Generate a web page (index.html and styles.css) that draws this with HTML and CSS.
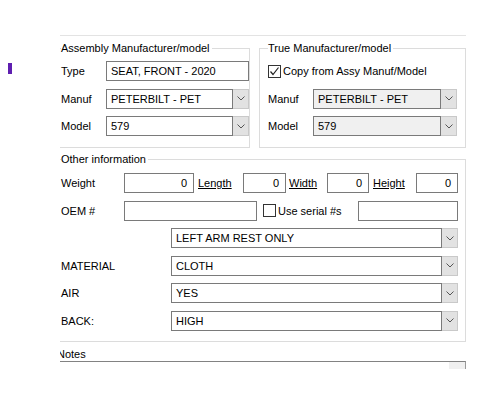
FILE: index.html
```html
<!DOCTYPE html>
<html>
<head>
<meta charset="utf-8">
<link rel="stylesheet" href="styles.css">
</head>
<body>
<div class="page">
  <div class="gutter"><div class="marker"></div></div>
  <div class="content">
    <div class="splitter-tick"></div>
    <div class="top-row">
      <fieldset class="group group-assy">
        <legend>Assembly Manufacturer/model</legend>
        <div class="row">
          <span class="lbl lbl-top">Type</span>
          <div class="field field-type">SEAT, FRONT - 2020</div>
        </div>
        <div class="row">
          <span class="lbl lbl-top">Manuf</span>
          <div class="combo combo-assy"><div class="combo-text">PETERBILT - PET</div><div class="combo-btn"><svg width="8" height="5" viewBox="0 0 8 5"><polyline points="0.5,0.5 4,4 7.5,0.5" fill="none" stroke="#555" stroke-width="1"/></svg></div></div>
        </div>
        <div class="row">
          <span class="lbl lbl-top">Model</span>
          <div class="combo combo-assy"><div class="combo-text">579</div><div class="combo-btn"><svg width="8" height="5" viewBox="0 0 8 5"><polyline points="0.5,0.5 4,4 7.5,0.5" fill="none" stroke="#555" stroke-width="1"/></svg></div></div>
        </div>
      </fieldset>
      <fieldset class="group group-true">
        <legend>True Manufacturer/model</legend>
        <div class="row">
          <span class="check checked"><svg width="11" height="11" viewBox="0 0 11 11"><polyline points="1.5,5.5 4,8.5 9.5,1.5" fill="none" stroke="#222" stroke-width="1.2"/></svg></span>
          <span class="check-text">Copy from Assy Manuf/Model</span>
        </div>
        <div class="row">
          <span class="lbl lbl-true">Manuf</span>
          <div class="combo combo-true disabled"><div class="combo-text">PETERBILT - PET</div><div class="combo-btn"><svg width="8" height="5" viewBox="0 0 8 5"><polyline points="0.5,0.5 4,4 7.5,0.5" fill="none" stroke="#555" stroke-width="1"/></svg></div></div>
        </div>
        <div class="row">
          <span class="lbl lbl-true">Model</span>
          <div class="combo combo-true disabled"><div class="combo-text">579</div><div class="combo-btn"><svg width="8" height="5" viewBox="0 0 8 5"><polyline points="0.5,0.5 4,4 7.5,0.5" fill="none" stroke="#555" stroke-width="1"/></svg></div></div>
        </div>
      </fieldset>
    </div>

    <fieldset class="group group-other">
      <legend>Other information</legend>
      <div class="rows">
        <div class="row">
          <span class="lbl lbl-other">Weight</span>
          <div class="field num w70">0</div>
          <span class="ulbl ul-len">Length</span>
          <div class="field num w43">0</div>
          <span class="ulbl ul-wid">Width</span>
          <div class="field num w42">0</div>
          <span class="ulbl ul-hei">Height</span>
          <div class="field num w42">0</div>
        </div>
        <div class="row">
          <span class="lbl lbl-other">OEM #</span>
          <div class="field w133"></div>
          <span class="check serial-check"></span>
          <span class="check-text">Use serial #s</span>
          <div class="field w100 push-right"></div>
        </div>
        <div class="row">
          <span class="lbl lbl-attr"></span>
          <div class="combo combo-wide"><div class="combo-text">LEFT ARM REST ONLY</div><div class="combo-btn"><svg width="8" height="5" viewBox="0 0 8 5"><polyline points="0.5,0.5 4,4 7.5,0.5" fill="none" stroke="#555" stroke-width="1"/></svg></div></div>
        </div>
        <div class="row">
          <span class="lbl lbl-attr">MATERIAL</span>
          <div class="combo combo-wide"><div class="combo-text">CLOTH</div><div class="combo-btn"><svg width="8" height="5" viewBox="0 0 8 5"><polyline points="0.5,0.5 4,4 7.5,0.5" fill="none" stroke="#555" stroke-width="1"/></svg></div></div>
        </div>
        <div class="row">
          <span class="lbl lbl-attr">AIR</span>
          <div class="combo combo-wide"><div class="combo-text">YES</div><div class="combo-btn"><svg width="8" height="5" viewBox="0 0 8 5"><polyline points="0.5,0.5 4,4 7.5,0.5" fill="none" stroke="#555" stroke-width="1"/></svg></div></div>
        </div>
        <div class="row">
          <span class="lbl lbl-attr">BACK:</span>
          <div class="combo combo-wide"><div class="combo-text">HIGH</div><div class="combo-btn"><svg width="8" height="5" viewBox="0 0 8 5"><polyline points="0.5,0.5 4,4 7.5,0.5" fill="none" stroke="#555" stroke-width="1"/></svg></div></div>
        </div>
      </div>
    </fieldset>

    <div class="notes-label">Notes</div>
    <div class="notes-box"><div class="notes-scroll"></div></div>
  </div>
</div>
</body>
</html>
```

FILE: styles.css
```css
html, body {
  margin: 0;
  padding: 0;
  background: #ffffff;
}
body {
  font-family: "Liberation Sans", Arial, sans-serif;
  font-size: 11px;
  color: #000;
  width: 500px;
  height: 400px;
  overflow: hidden;
}
.page {
  display: flex;
  padding-top: 35px;
}
.gutter {
  width: 60px;
  flex: none;
}
.marker {
  width: 4px;
  height: 11px;
  margin: 28px 0 0 8px;
  background: #5e1fb0;
}
.content {
  width: 406px;
  border-top: 1px solid #e3e3e3;
  overflow: hidden;
  position: relative;
}
.splitter-tick {
  position: absolute;
  left: 105px;
  top: -4px;
  width: 1px;
  height: 4px;
  background: #d0d0d0;
}
.top-row {
  display: flex;
  gap: 9px;
  margin-top: 5px;
}
.group {
  margin: 0;
  padding: 0;
  border: 1px solid #dcdcdc;
  min-width: 0;
}
.group legend {
  padding: 0 2px 0 0;
  margin-left: 0;
  line-height: 14px;
  height: 14px;
}
.group-assy {
  width: 190px;
  box-sizing: border-box;
  border-left: none;
  padding: 6px 0 11px 1px;
}
.group-true {
  width: 207px;
  box-sizing: border-box;
  padding: 6px 8px 11px 8px;
}
.row {
  display: flex;
  align-items: center;
  height: 20px;
  margin-bottom: 7.5px;
}
.row:last-child { margin-bottom: 0; }
.lbl {
  flex: none;
  white-space: nowrap;
}
.lbl-top { width: 45px; }
.lbl-true { width: 45px; }
.lbl-other { width: 63px; }
.lbl-attr { width: 110px; }
.field {
  box-sizing: border-box;
  height: 20px;
  border: 1px solid #7a7a7a;
  background: #fff;
  padding: 0 4px;
  line-height: 18px;
  white-space: nowrap;
  overflow: hidden;
}
.field-type { width: 144px; }
.num { text-align: right; padding-right: 6px; }
.w70 { width: 70px; }
.w43 { width: 43px; }
.w42 { width: 42px; }
.w133 { width: 133px; }
.w100 { width: 100px; }
.push-right { margin-left: auto; }
.ulbl {
  flex: none;
  text-decoration: underline;
  box-sizing: border-box;
}
.ul-len { width: 49px; padding-left: 4px; }
.ul-wid { width: 41px; padding-left: 3px; }
.ul-hei { width: 47px; padding-left: 4px; }
.combo {
  display: flex;
  height: 20px;
  box-sizing: border-box;
}
.combo-assy { width: 144px; }
.combo-true { width: 144px; }
.combo-wide { flex: 1; }
.combo-text {
  flex: 1;
  box-sizing: border-box;
  border: 1px solid #7a7a7a;
  background: #fff;
  padding: 0 4px;
  line-height: 18px;
  white-space: nowrap;
  overflow: hidden;
}
.disabled .combo-text { background: #f0f0f0; }
.combo-btn {
  width: 16px;
  flex: none;
  box-sizing: border-box;
  background: #e2e2e2;
  border: 1px solid #c9c9c9;
  border-left: none;
  display: flex;
  align-items: center;
  justify-content: center;
}
.check {
  flex: none;
  width: 13px;
  height: 13px;
  box-sizing: border-box;
  border: 1px solid #333;
  background: #fff;
  display: flex;
  align-items: center;
  justify-content: center;
}
.check-text {
  margin-left: 2px;
  white-space: nowrap;
}
.serial-check { margin-left: 6px; }
.group-other {
  margin-top: 4px;
  padding: 7px 7px 10px 1px;
  border-left: none;
}
.rows {
  display: flex;
  flex-direction: column;
}
.rows .row { margin-bottom: 7.6px; }
.rows .row:last-child { margin-bottom: 0; }
.notes-label {
  margin: 5px 0 0 -3px;
  line-height: 14px;
  height: 14px;
  white-space: nowrap;
}
.notes-box {
  width: 406px;
  height: 8px;
  box-sizing: border-box;
  border-top: 1px solid #828282;
  border-right: 1px solid #9a9a9a;
  display: flex;
  justify-content: flex-end;
}
.notes-scroll {
  width: 16px;
  height: 7px;
  background: #f0f0f0;
}
```
